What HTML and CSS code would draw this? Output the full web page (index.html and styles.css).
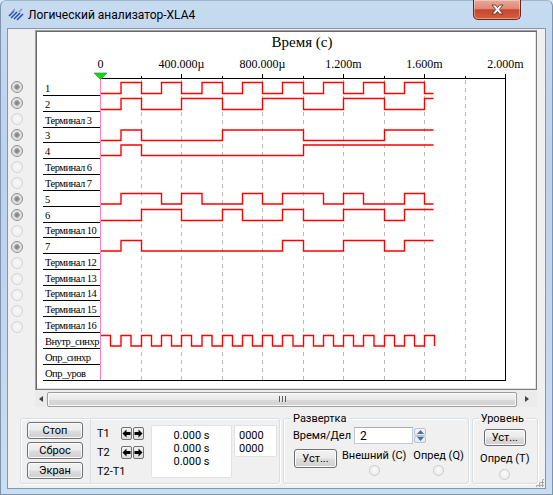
FILE: index.html
```html
<!DOCTYPE html>
<html lang="ru">
<head>
    <meta charset="UTF-8">
    <title>Логический анализатор-XLA4</title>
    <link rel="stylesheet" href="styles.css">
</head>
<body>
<div class="window">
    <header class="titlebar">
        <svg class="app-icon" width="17" height="13" viewBox="0 0 17 13">
            <path d="M1 8 L6 3 M3 10 L9 4 M6 11 L12 5 M9 12 L15 6" stroke="#2f4fb5" stroke-width="1.6" fill="none"/>
            <path d="M4 4 L7 1 M11 4 L14 1" stroke="#7a8fd8" stroke-width="1.2" fill="none"/>
        </svg>
        <span class="title">Логический анализатор-XLA4</span>
        <button class="close-btn" aria-label="Закрыть">
            <svg width="13" height="11" viewBox="0 0 13 11">
                <path d="M1 1 H4.5 L6.5 3.6 L8.5 1 H12 L8.3 5.5 L12 10 H8.5 L6.5 7.4 L4.5 10 H1 L4.7 5.5 Z" fill="#fff" stroke="#5a1f14" stroke-width="0.8"/>
            </svg>
        </button>
    </header>

    <div class="client">
        <div class="scope">
            <div class="probes">
                <span class="probe on"></span>
                <span class="probe on"></span>
                <span class="probe"></span>
                <span class="probe on"></span>
                <span class="probe on"></span>
                <span class="probe"></span>
                <span class="probe"></span>
                <span class="probe on"></span>
                <span class="probe on"></span>
                <span class="probe"></span>
                <span class="probe on"></span>
                <span class="probe"></span>
                <span class="probe"></span>
                <span class="probe"></span>
                <span class="probe"></span>
                <span class="probe"></span>
            </div>

            <div class="display">
                <div class="screen">
                    <svg class="chart" width="498" height="356" viewBox="37 32 498 356">
                        <!-- time axis -->
                        <text class="axis-title" x="302" y="47" text-anchor="middle">Время (с)</text>
                        <g class="tick-label" text-anchor="middle">
                            <text x="100.5" y="67.5">0</text>
                            <text x="181.5" y="67.5">400.000µ</text>
                            <text x="262.5" y="67.5">800.000µ</text>
                            <text x="343.5" y="67.5">1.200m</text>
                            <text x="424.5" y="67.5">1.600m</text>
                            <text x="505.5" y="67.5">2.000m</text>
                        </g>

                        <g class="grid">
                            <line x1="141.5" y1="80" x2="141.5" y2="380"/>
                            <line x1="181.5" y1="80" x2="181.5" y2="380"/>
                            <line x1="222.5" y1="80" x2="222.5" y2="380"/>
                            <line x1="262.5" y1="80" x2="262.5" y2="380"/>
                            <line x1="303.5" y1="80" x2="303.5" y2="380"/>
                            <line x1="343.5" y1="80" x2="343.5" y2="380"/>
                            <line x1="384.5" y1="80" x2="384.5" y2="380"/>
                            <line x1="424.5" y1="80" x2="424.5" y2="380"/>
                            <line x1="465.5" y1="80" x2="465.5" y2="380"/>
                        </g>

                        <g class="frame">
                            <path d="M100 78.5 H506 M505.5 74 V381"/>
                            <path d="M141.5 76 V78 M181.5 74 V78 M222.5 76 V78 M262.5 74 V78 M303.5 76 V78 M343.5 74 V78 M384.5 76 V78 M424.5 74 V78 M465.5 76 V78"/>
                            <path d="M43 95.5 H100 M43 111.5 H100 M43 127.5 H100 M43 142.5 H100 M43 158.5 H100
                                     M43 174.5 H100 M43 190.5 H100 M43 206.5 H100 M43 222.5 H100 M43 237.5 H100
                                     M43 253.5 H100 M43 269.5 H100 M43 285.5 H100 M43 300.5 H100 M43 316.5 H100
                                     M43 332.5 H100 M43 348.5 H100 M43 364.5 H100 M43 380.5 H506"/>
                        </g>

                        <g class="sig-label">
                            <text x="45" y="91.5">1</text>
                            <text x="45" y="107.5">2</text>
                            <text x="45" y="123.5">Терминал 3</text>
                            <text x="45" y="138.5">3</text>
                            <text x="45" y="154.5">4</text>
                            <text x="45" y="170.5">Терминал 6</text>
                            <text x="45" y="186.5">Терминал 7</text>
                            <text x="45" y="202.5">5</text>
                            <text x="45" y="218.5">6</text>
                            <text x="45" y="233.5">Терминал 10</text>
                            <text x="45" y="249.5">7</text>
                            <text x="45" y="265.5">Терминал 12</text>
                            <text x="45" y="281.5">Терминал 13</text>
                            <text x="45" y="296.5">Терминал 14</text>
                            <text x="45" y="312.5">Терминал 15</text>
                            <text x="45" y="328.5">Терминал 16</text>
                            <text x="45" y="344.5">Внутр_синхр</text>
                            <text x="45" y="360.5">Опр_синхр</text>
                            <text x="45" y="376.5">Опр_уров</text>
                        </g>

                        <!-- traces -->
                        <g class="trace">
                            <path d="M100.5 93.5 H121 V82.5 H141.5 V93.5 H161.5 V82.5 H181.5 V93.5 H202 V82.5 H222.5 V93.5 H242.5 V82.5 H262.5 V93.5 H282.5 V82.5 H303.5 V93.5 H323.5 V82.5 H343.5 V93.5 H363.5 V82.5 H384.5 V93.5 H404.5 V82.5 H424.5 V93.5 H433.5"/>
                            <path d="M100.5 109.5 H121 V98.5 H141.5 V109.5 H181.5 V98.5 H222.5 V109.5 H262.5 V98.5 H303.5 V109.5 H343.5 V98.5 H384.5 V109.5 H424.5 V98.5 H433.5"/>
                            <path d="M100.5 140.5 H121 V130 H141.5 V140.5 H222.5 V130 H303.5 V140.5 H384.5 V130 H433.5"/>
                            <path d="M100.5 155.5 H121 V145 H141.5 V155.5 H303.5 V145 H433.5"/>
                            <path d="M100.5 204 H121 V193.5 H161.5 V204 H181.5 V193.5 H202 V204 H242.5 V193.5 H262.5 V204 H282.5 V193.5 H323.5 V204 H343.5 V193.5 H363.5 V204 H404.5 V193.5 H424.5 V204 H433.5"/>
                            <path d="M100.5 220.5 H141.5 V209.5 H181.5 V220.5 H222.5 V209.5 H242.5 V220.5 H282.5 V209.5 H303.5 V220.5 H343.5 V209.5 H384.5 V220.5 H404.5 V209.5 H433.5"/>
                            <path d="M100.5 251 H121 V240.5 H141.5 V251 H282.5 V240.5 H303.5 V251 H343.5 V240.5 H384.5 V251 H404.5 V240.5 H433.5"/>
                            <path d="M100.5 335.5 H110.5 V346 H121 V335.5 H131 V346 H141.5 V335.5 H151.5 V346 H161.5 V335.5 H171.5 V346 H181.5 V335.5 H191.5 V346 H202 V335.5 H212 V346 H222.5 V335.5 H232.5 V346 H242.5 V335.5 H252.5 V346 H262.5 V335.5 H272.5 V346 H282.5 V335.5 H293 V346 H303.5 V335.5 H313.5 V346 H323.5 V335.5 H333.5 V346 H343.5 V335.5 H353.5 V346 H363.5 V335.5 H374 V346 H384.5 V335.5 H394.5 V346 H404.5 V335.5 H414.5 V346 H424.5 V335.5 H434.5 V346"/>
                        </g>

                        <!-- T1 cursor -->
                        <line class="cursor" x1="100.5" y1="74" x2="100.5" y2="380"/>
                        <path class="cursor-mark" d="M94 73 H107 L100.5 79.5 Z"/>
                    </svg>
                </div>

                <div class="hscroll">
                    <span class="scroll-arrow left"></span>
                    <div class="thumb"><span class="grip"></span></div>
                    <span class="scroll-arrow right"></span>
                </div>
            </div>
        </div>

        <div class="controls">
            <div class="group run-group">
                <div class="run-buttons">
                    <button class="btn">Стоп</button>
                    <button class="btn">Сброс</button>
                    <button class="btn">Экран</button>
                </div>
                <div class="cursors">
                    <div class="cursor-rows">
                        <span>T1</span>
                        <span class="nudge">
                            <button class="arrow-btn"><svg width="9" height="9" viewBox="0 0 9 9"><path d="M0.5 4.5 L4.5 0.5 V3 H8.5 V6 H4.5 V8.5 Z"/></svg></button>
                            <button class="arrow-btn"><svg width="9" height="9" viewBox="0 0 9 9"><path d="M8.5 4.5 L4.5 0.5 V3 H0.5 V6 H4.5 V8.5 Z"/></svg></button>
                        </span>
                        <span>T2</span>
                        <span class="nudge">
                            <button class="arrow-btn"><svg width="9" height="9" viewBox="0 0 9 9"><path d="M0.5 4.5 L4.5 0.5 V3 H8.5 V6 H4.5 V8.5 Z"/></svg></button>
                            <button class="arrow-btn"><svg width="9" height="9" viewBox="0 0 9 9"><path d="M8.5 4.5 L4.5 0.5 V3 H0.5 V6 H4.5 V8.5 Z"/></svg></button>
                        </span>
                        <span class="span-2">T2-T1</span>
                    </div>
                    <div class="readout time-readout">
                        <span>0.000 s</span>
                        <span>0.000 s</span>
                        <span>0.000 s</span>
                    </div>
                    <div class="readout bits-readout">
                        <span>0000</span>
                        <span>0000</span>
                    </div>
                </div>
            </div>

            <fieldset class="group sweep-group">
                <legend>Развертка</legend>
                <div class="sweep-row">
                    <label for="timeDiv">Время/Дел</label>
                    <input id="timeDiv" class="spin-input" value="2" readonly>
                    <span class="spin-btns">
                        <button><svg width="7" height="4" viewBox="0 0 7 4"><path d="M0 4 L3.5 0 L7 4 Z"/></svg></button>
                        <button><svg width="7" height="4" viewBox="0 0 7 4"><path d="M0 0 L3.5 4 L7 0 Z"/></svg></button>
                    </span>
                </div>
                <div class="sweep-row">
                    <button class="btn set-btn">Уст...</button>
                    <div class="trigger">
                        <span>Внешний (С)</span>
                        <span class="radio"></span>
                    </div>
                    <div class="trigger">
                        <span>Опред (Q)</span>
                        <span class="radio"></span>
                    </div>
                </div>
            </fieldset>

            <fieldset class="group level-group">
                <legend>Уровень</legend>
                <button class="btn set-btn">Уст...</button>
                <span class="level-label">Опред (Т)</span>
                <span class="radio"></span>
            </fieldset>
        </div>
        <span class="size-grip"></span>
    </div>
</div>
</body>
</html>
```

FILE: styles.css
```css
* {
    margin: 0;
    padding: 0;
    box-sizing: border-box;
}

body {
    width: 553px;
    height: 495px;
    overflow: hidden;
    font-family: Roboto, 'Noto Sans', sans-serif;
    font-size: 12px;
    color: #000;
    background: #dfe9f5;
}

.window {
    height: 495px;
    display: flex;
    flex-direction: column;
    padding: 0 6px 5px 6px;
    border: 1px solid #7e93ad;
    border-top-color: #9fb5ce;
    border-radius: 6px 6px 0 0;
    background: linear-gradient(180deg, #c6daf0 0%, #bcd2eb 35%, #c3d7ee 70%, #cbddf1 100%);
}

/* title bar */
.titlebar {
    height: 27px;
    display: flex;
    align-items: flex-start;
}

.app-icon {
    margin: 7px 0 0 1px;
}

.title {
    margin: 7px 0 0 3px;
    font-size: 12px;
    line-height: 15px;
    color: #000;
}

.close-btn {
    margin: -1px 25px 0 auto;
    width: 48px;
    height: 20px;
    display: flex;
    align-items: center;
    justify-content: center;
    border: 1px solid #6a2618;
    border-top: none;
    border-radius: 0 0 5px 5px;
    background: linear-gradient(180deg, #e8a899 0%, #dc8a77 45%, #c8452d 52%, #d4613f 100%);
    box-shadow: inset 0 0 0 1px rgba(255, 255, 255, 0.35);
}

/* client area */
.client {
    flex: 1;
    display: flex;
    flex-direction: column;
    background: #f0f0f0;
    border: 1px solid #8396ae;
    position: relative;
}

.scope {
    display: flex;
    height: 378px;
}

.probes {
    width: 27px;
    padding: 52px 0 0 3px;
    display: flex;
    flex-direction: column;
    gap: 4px;
}

.probe {
    width: 12px;
    height: 12px;
    border-radius: 50%;
    border: 1px solid #d2d2d2;
    background: radial-gradient(circle at 50% 50%, #f8f8f8 0, #ececec 100%);
}

.probe.on {
    border-color: #8b8b8b;
    background: radial-gradient(circle at 50% 50%, #7e7e7e 0, #9a9a9a 2.4px, #dcdcdc 3px, #f2f2f2 100%);
}

.display {
    width: 502px;
    display: flex;
    flex-direction: column;
}

.screen {
    margin-top: 1px;
    padding: 1px;
    background: #fff;
    border: 1px solid;
    border-color: #a0a0a0 #7a7a7a #7a7a7a #a0a0a0;
    box-shadow: inset 1px 1px 0 #6a6a6a, inset -1px -1px 0 #e3e3e3;
}

.chart {
    display: block;
}

.axis-title {
    font-family: 'Liberation Serif', serif;
    font-size: 15px;
}

.tick-label {
    font-family: 'Liberation Serif', serif;
    font-size: 12px;
}

.sig-label {
    font-family: 'Liberation Serif', serif;
    font-size: 10.5px;
    letter-spacing: -0.5px;
}

.grid line {
    stroke: #b9b9b9;
    stroke-width: 1;
    stroke-dasharray: 4 4;
}

.frame path {
    stroke: #000;
    stroke-width: 1;
    fill: none;
}

.trace path {
    stroke: #f00;
    stroke-width: 1.4;
    fill: none;
}

.cursor {
    stroke: #ff80c0;
    stroke-width: 1;
}

.cursor-mark {
    fill: #1fd21f;
    stroke: #0d9a0d;
    stroke-width: 0.6;
}

/* horizontal scroll bar */
.hscroll {
    margin-top: 1px;
    height: 16px;
    display: flex;
    align-items: center;
    background: #ebebeb;
}

.scroll-arrow {
    width: 12px;
    display: flex;
    justify-content: center;
}

.scroll-arrow.right {
    width: 20px;
}

.scroll-arrow::before {
    content: '';
    border-top: 3.5px solid transparent;
    border-bottom: 3.5px solid transparent;
}

.scroll-arrow.left::before {
    border-right: 4px solid #404040;
}

.scroll-arrow.right::before {
    border-left: 4px solid #404040;
}

.thumb {
    flex: 1;
    height: 15px;
    display: flex;
    align-items: center;
    justify-content: center;
    border: 1px solid #9c9c9c;
    border-radius: 2px;
    background: linear-gradient(180deg, #f4f4f4 0%, #e8e8e8 50%, #d9d9d9 51%, #d2d2d2 100%);
    box-shadow: inset 0 0 0 1px #fafafa;
}

.grip {
    width: 7px;
    height: 6px;
    background: repeating-linear-gradient(90deg, #5c5c5c 0 1px, #f2f2f2 1px 2px, transparent 2px 3px);
}

/* bottom controls */
.controls {
    display: flex;
    align-items: flex-start;
    padding: 4px 7px 0 12px;
    gap: 3px;
    font-size: 11px;
    white-space: nowrap;
}

.group {
    border: 1px solid #d5dfe5;
    border-radius: 3px;
    box-shadow: inset 1px 1px 0 #fff, 1px 1px 0 #fff;
}

legend {
    margin-left: -2px;
    padding: 0 2px;
    line-height: 15px;
    font-size: 11px;
}

.btn {
    font-family: inherit;
    font-size: 11px;
    color: #000;
    border: 1px solid #707070;
    border-radius: 3px;
    background: linear-gradient(180deg, #f2f2f2 0%, #ebebeb 48%, #dddddd 52%, #cfcfcf 100%);
    box-shadow: inset 0 0 0 1px #fbfbfb;
}

.run-group {
    margin-top: 7px;
    width: 260px;
    height: 66px;
    display: flex;
}

.run-buttons {
    width: 69px;
    padding: 3px 0 0 6px;
    display: flex;
    flex-direction: column;
    gap: 3px;
}

.run-buttons .btn {
    width: 56px;
    height: 17px;
    line-height: 14px;
}

.cursors {
    flex: 1;
    display: flex;
    align-items: flex-start;
    padding: 6px 0 0 6px;
    border-left: 1px solid #d5dfe5;
}

.cursor-rows {
    width: 54px;
    padding-top: 2px;
    display: grid;
    grid-template-columns: 24px 23px;
    grid-auto-rows: 13px;
    row-gap: 6px;
    align-items: center;
}

.span-2 {
    grid-column: span 2;
}

.nudge {
    display: flex;
    gap: 1px;
}

.arrow-btn {
    width: 11px;
    height: 13px;
    display: flex;
    align-items: center;
    justify-content: center;
    border: 1px solid #707070;
    border-radius: 2px;
    background: linear-gradient(180deg, #f2f2f2 0%, #dddddd 100%);
}

.arrow-btn path {
    fill: #000;
}

.readout {
    background: #fff;
    border: 1px solid #e2e2e2;
    border-radius: 2px;
    padding-top: 3px;
    display: flex;
    flex-direction: column;
    line-height: 13px;
}

.time-readout {
    width: 81px;
    height: 53px;
    align-items: center;
}

.bits-readout {
    width: 43px;
    height: 32px;
    margin-left: 2px;
    padding-left: 4px;
}

.sweep-group {
    width: 184px;
    height: 73px;
    padding: 0 4px 0 9px;
}

.sweep-row {
    display: flex;
    align-items: center;
}

.sweep-row:first-of-type {
    margin-top: 1px;
    height: 17px;
}

.sweep-row label {
    width: 61px;
    flex-shrink: 0;
}

.spin-input {
    width: 59px;
    height: 17px;
    padding-left: 5px;
    font-family: inherit;
    font-size: 12px;
    border: 1px solid #c5c8d0;
    border-top-color: #abadb3;
    outline: none;
}

.spin-btns {
    margin-left: 1px;
    width: 12px;
    height: 15px;
    display: flex;
    flex-direction: column;
}

.spin-btns button {
    flex: 1;
    display: flex;
    align-items: center;
    justify-content: center;
    border: 1px solid #b5c3d6;
    border-radius: 2px;
    background: linear-gradient(180deg, #f4f6f9, #e2e7ee);
}

.spin-btns path {
    fill: #566b94;
}

.sweep-row:last-of-type {
    margin-top: 5px;
    align-items: flex-start;
}

.set-btn {
    width: 43px;
    height: 19px;
    margin-left: 1px;
    flex-shrink: 0;
}

.trigger {
    display: flex;
    flex-direction: column;
    align-items: center;
    line-height: 13px;
    margin-left: 5px;
    flex-shrink: 0;
}

.trigger + .trigger {
    margin-left: 7px;
}

.radio {
    width: 11px;
    height: 11px;
    border-radius: 50%;
    border: 1px solid #cbcbcb;
    background: radial-gradient(circle at 50% 40%, #fbfbfb 0, #e7e7e7 100%);
}

.trigger .radio {
    margin-top: 3px;
}

.level-group {
    width: 66px;
    height: 73px;
    padding: 3px 0 0 0;
    display: flex;
    flex-direction: column;
    align-items: center;
}

.level-group legend {
    margin-left: 6px;
}

.level-group .set-btn {
    width: 42px;
    height: 17px;
    margin: 0;
}

.level-label {
    margin-top: 6px;
    line-height: 13px;
}

.level-group .radio {
    margin-top: 4px;
}

.size-grip {
    position: absolute;
    right: 1px;
    bottom: 1px;
    width: 9px;
    height: 9px;
    background: radial-gradient(circle, #a8a8a8 0 1px, transparent 1.2px) 0 0 / 3px 3px;
    clip-path: polygon(100% 0, 100% 100%, 0 100%);
}
```
